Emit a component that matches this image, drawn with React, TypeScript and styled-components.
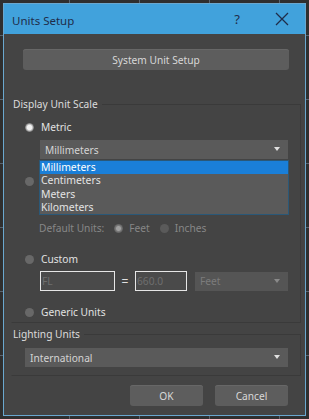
import React from "react"
import styled, { createGlobalStyle, css } from "styled-components"

const Global = createGlobalStyle`
    html, body {
        margin: 0;
        background: #2e2e2e;
    }
    body {
        width: 309px;
        height: 419px;
        overflow: hidden;
        font-family: "Noto Sans", "Open Sans", sans-serif;
        background-color: #2f2f2f;
        background-image:
            repeating-linear-gradient(90deg, transparent 0 69px, #5a6470 69px 70px),
            repeating-linear-gradient(0deg, transparent 0 63px, #5a6470 63px 64px);
    }
`

type RadioProps = { $checked?: boolean }

export default () => (<>
    <Global />
    <Window>
        <TitleBar>
            <Title>Units Setup</Title>
            <TitleButton $w={44}>?</TitleButton>
            <TitleButton $w={46}>
                <svg width="14" height="14" viewBox="0 0 14 14">
                    <path d="M1 1 L13 13 M13 1 L1 13" stroke="#1f2d4a" strokeWidth="1.3" fill="none" />
                </svg>
            </TitleButton>
        </TitleBar>
        <Body>
            <WideButton>System Unit Setup</WideButton>

            <Group $h={219}>
                <Legend>Display Unit Scale</Legend>
                <OptionRow $top={14}>
                    <Radio $checked />
                    <OptionLabel>Metric</OptionLabel>
                </OptionRow>
                <SelectWrap>
                    <Select>
                        Millimeters
                        <Arrow />
                    </Select>
                    <DropList>
                        <DropItem $active>Millimeters</DropItem>
                        <DropItem>Centimeters</DropItem>
                        <DropItem>Meters</DropItem>
                        <DropItem>Kilometers</DropItem>
                    </DropList>
                </SelectWrap>
                {/* US Standard option, hidden under the open list */}
                <OptionRow $top={14}>
                    <Radio />
                </OptionRow>
                <DefaultRow>
                    Default Units:
                    <SmallRadio $checked />
                    <span>Feet</span>
                    <SmallRadio />
                    <span>Inches</span>
                </DefaultRow>
                <OptionRow $top={15}>
                    <Radio />
                    <OptionLabel>Custom</OptionLabel>
                </OptionRow>
                <CustomRow>
                    <TextBox $w={75}>FL</TextBox>
                    <Equals>=</Equals>
                    <TextBox $w={52}>660.0</TextBox>
                    <DimSelect>
                        Feet
                        <Arrow $dim />
                    </DimSelect>
                </CustomRow>
                <OptionRow $top={13}>
                    <Radio />
                    <OptionLabel>Generic Units</OptionLabel>
                </OptionRow>
            </Group>

            <Group $h={42} $top={11}>
                <Legend>Lighting Units</Legend>
                <LightSelect>
                    International
                    <Arrow />
                </LightSelect>
            </Group>

            <Footer>
                <DialogButton>OK</DialogButton>
                <DialogButton>Cancel</DialogButton>
            </Footer>
        </Body>
    </Window>
</>)

const Window = styled.div`
    box-sizing: border-box;
    margin: 3px 0 0 3px;
    width: 303px;
    height: 413px;
    border: 1px solid #6aa8cf;
    background: #444444;
    display: flex;
    flex-direction: column;
`

const TitleBar = styled.div`
    height: 30px;
    background: #41a2dc;
    display: flex;
    align-items: center;
    color: #1f2d4a;
    font-size: 11.5px;
`

const Title = styled.div`
    flex: 1;
    padding-left: 8px;
    padding-top: 2px;
`

const TitleButton = styled.div<{ $w: number }>`
    width: ${p => p.$w}px;
    height: 30px;
    display: flex;
    align-items: center;
    justify-content: center;
    font-size: 13px;
`

const Body = styled.div`
    padding: 15px 4px 0 6px;
    display: flex;
    flex-direction: column;
    color: #dcdcdc;
    font-size: 10.2px;
`

const buttonBase = css`
    box-sizing: border-box;
    height: 21px;
    background: #5d5d5d;
    border-radius: 3px;
    color: #d8d8d8;
    display: flex;
    align-items: center;
    justify-content: center;
    box-shadow: inset 0 1px 0 #676767;
`

const WideButton = styled.div`
    ${buttonBase}
    margin: 0 12px 0 13px;
`

const Group = styled.div<{ $h: number, $top?: number }>`
    position: relative;
    box-sizing: border-box;
    margin-top: ${p => p.$top ?? 34}px;
    height: ${p => p.$h}px;
    margin-left: 1px;
    border: 1px solid #3a3a3a;
    border-left-color: transparent;
    padding: 0 12px 0 28px;
    display: flex;
    flex-direction: column;
`

const Legend = styled.div`
    position: absolute;
    top: -9px;
    left: -3px;
    padding: 0 4px 0 4px;
    background: #444444;
    color: #dcdcdc;
    line-height: 16px;
`

const OptionRow = styled.div<{ $top: number }>`
    display: flex;
    align-items: center;
    margin-left: -15px;
    margin-top: ${p => p.$top}px;
    height: 16px;
`

const Radio = styled.span<RadioProps>`
    box-sizing: border-box;
    width: 9px;
    height: 9px;
    border-radius: 50%;
    background: ${p => p.$checked
        ? "radial-gradient(circle, #f2f2f2 0 2.2px, #bdbdbd 3.2px, #6d6d6d 4.5px)"
        : "#686868"};
    margin-right: 7px;
`

const OptionLabel = styled.span`
    color: #e2e2e2;
`

const SelectWrap = styled.div`
    position: relative;
    margin-top: 5px;
`

const selectBase = css`
    position: relative;
    box-sizing: border-box;
    height: 19px;
    background: #5a5a5a;
    color: #d4d4d4;
    display: flex;
    align-items: center;
    padding-left: 5px;
`

const Select = styled.div`
    ${selectBase}
`

const Arrow = styled.span<{ $dim?: boolean }>`
    position: absolute;
    right: 8px;
    top: 7px;
    width: 0;
    height: 0;
    border-left: 3.5px solid transparent;
    border-right: 3.5px solid transparent;
    border-top: 4px solid ${p => p.$dim ? "#8a8a8a" : "#e0e0e0"};
`

const DropList = styled.div`
    position: absolute;
    top: 20px;
    left: -1px;
    right: -1px;
    box-sizing: border-box;
    border: 1px solid #2a5878;
    background: #5a5a5a;
    z-index: 2;
    padding: 0;
`

const DropItem = styled.div<{ $active?: boolean }>`
    height: 13.3px;
    line-height: 13px;
    padding-left: 1px;
    font-size: 10.4px;
    color: ${p => p.$active ? "#ffffff" : "#e4e4e4"};
    background: ${p => p.$active ? "#1a7fd8" : "transparent"};
`

const DefaultRow = styled.div`
    display: flex;
    align-items: center;
    margin-top: 31px;
    height: 16px;
    margin-left: -1px;
    color: #878787;
    span {
        color: #878787;
    }
`

const SmallRadio = styled(Radio)`
    margin: 0 6px 0 10px;
    background: ${p => p.$checked
        ? "radial-gradient(circle, #a0a0a0 0 2px, #7a7a7a 3px, #5e5e5e 4.5px)"
        : "#5a5a5a"};
`

const CustomRow = styled.div`
    display: flex;
    align-items: center;
    margin-top: 4px;
    height: 20px;
`

const TextBox = styled.div<{ $w: number }>`
    box-sizing: border-box;
    width: ${p => p.$w}px;
    height: 20px;
    border: 1px solid #e6e6e6;
    background: #4a4a4a;
    color: #6e6e6e;
    display: flex;
    align-items: center;
    padding-left: 1px;
`

const Equals = styled.span`
    width: 20px;
    text-align: center;
    color: #e0e0e0;
    font-size: 12px;
`

const DimSelect = styled.div`
    ${selectBase}
    flex: 1;
    margin-left: 8px;
    background: #555555;
    color: #7c7c7c;
    padding-left: 5px;
`

const LightSelect = styled.div`
    ${selectBase}
    margin: 13px 0 0 -15px;
`

const Footer = styled.div`
    display: flex;
    justify-content: flex-end;
    gap: 12px;
    margin-top: 9px;
    padding-right: 13px;
`

const DialogButton = styled.div`
    ${buttonBase}
    width: 73px;
`
